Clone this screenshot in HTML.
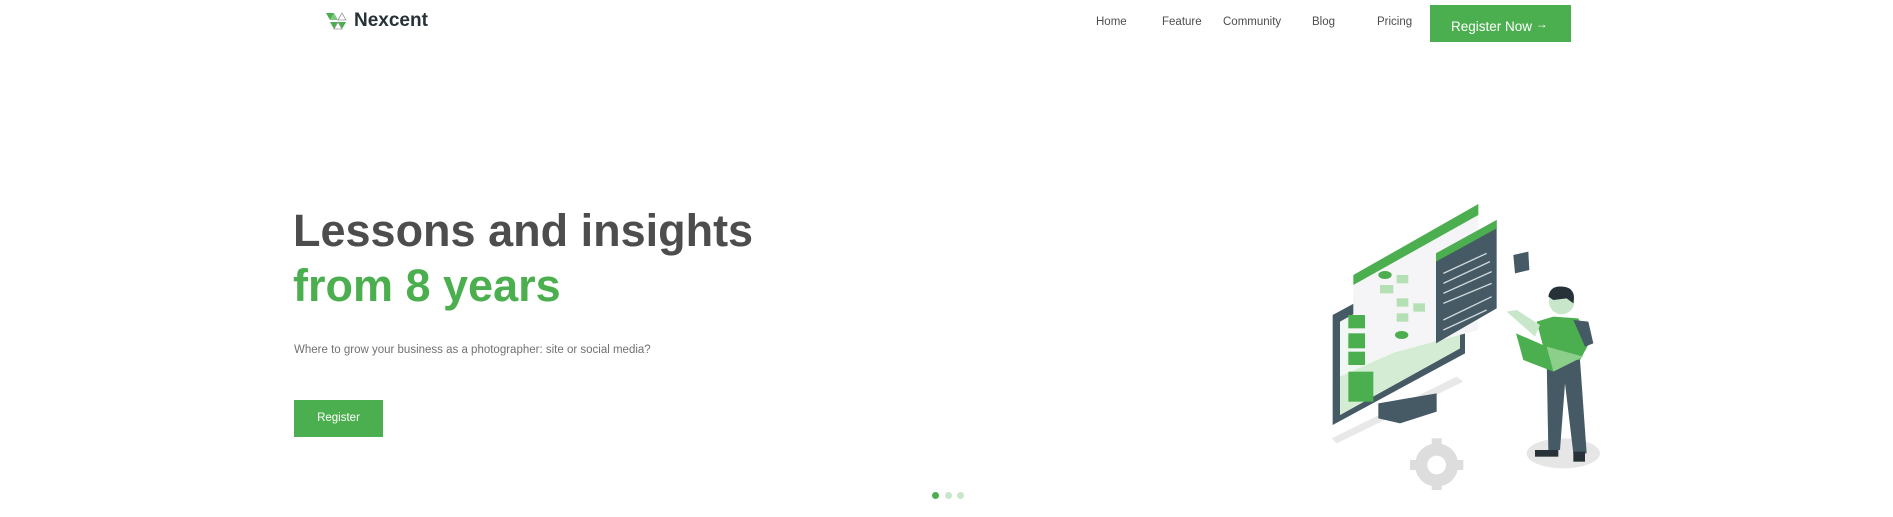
<!DOCTYPE html>
<html><head><meta charset="utf-8"><style>
*{margin:0;padding:0;box-sizing:border-box}
body{width:1893px;height:517px;background:#fff;font-family:"Liberation Sans",Arial,sans-serif;position:relative;overflow:hidden}
.a{position:absolute;white-space:nowrap}
.nav{font-size:11.5px;color:#4d4d4d;top:16px}
</style></head><body>
<svg class="a" style="left:326px;top:12px" width="24" height="18" viewBox="0 0 24 18">
<polygon points="0,1 8,1 4,8" fill="#4caf4f"/><polygon points="4,8 12,8 8,1" fill="#4caf4f" opacity=".7"/>
<polygon points="12,8 16,1 20,8" fill="none" stroke="#999" stroke-width=".8"/>
<polygon points="4,10 12,10 8,17" fill="#4caf4f"/><polygon points="12,10 20,10 16,17" fill="#4caf4f"/>
<polygon points="8,17 12,10 16,17" fill="none" stroke="#999" stroke-width=".8"/>
</svg>
<div class="a" style="left:354px;top:10px;font-size:19px;font-weight:bold;color:#263238">Nexcent</div>
<div class="a nav" style="left:1096px">Home</div>
<div class="a nav" style="left:1162px">Feature</div>
<div class="a nav" style="left:1223px">Community</div>
<div class="a nav" style="left:1312px">Blog</div>
<div class="a nav" style="left:1377px">Pricing</div>
<div class="a" style="left:1430px;top:5px;width:141px;height:37px;background:#4caf4f;color:#fff;font-size:13.5px;line-height:38px;padding-left:21px">Register Now <span style="font-size:12px;vertical-align:3px">&rarr;</span></div>
<div class="a" style="left:293px;top:203px;font-size:45px;font-weight:bold;color:#4d4d4d;line-height:56px">Lessons and insights</div>
<div class="a" style="left:293px;top:258px;font-size:45px;font-weight:bold;color:#4caf4f;line-height:56px">from 8 years</div>
<div class="a" style="left:294px;top:344px;font-size:11.5px;color:#717171">Where to grow your business as a photographer: site or social media?</div>
<div class="a" style="left:294px;top:400px;width:89px;height:37px;background:#4caf4f;color:#fff;font-size:11.5px;line-height:37px;text-align:center">Register</div>
<div class="a" style="left:932px;top:492px;width:7px;height:7px;border-radius:50%;background:#4caf4f"></div>
<div class="a" style="left:945px;top:492px;width:7px;height:7px;border-radius:50%;background:#c8e6c9"></div>
<div class="a" style="left:957px;top:492px;width:7px;height:7px;border-radius:50%;background:#c8e6c9"></div>
<svg class="a" style="left:1300px;top:190px" width="330" height="300" viewBox="0 0 990 900">
<polygon points="95,745 470,560 490,575 110,760" fill="#e8e8e8"/>
<ellipse cx="790" cy="790" rx="110" ry="45" fill="#e6e6e6"/>
<g fill="#ddd"><circle cx="410" cy="825" r="65"/><rect x="395" y="745" width="30" height="160"/><rect x="330" y="810" width="160" height="30"/></g>
<circle cx="410" cy="825" r="28" fill="#fff"/>
<polygon points="235,640 410,610 410,665 300,700 235,685" fill="#455a64"/>
<polygon points="98,375 495,160 495,490 98,705" fill="#455a64"/>
<polygon points="120,395 480,195 480,475 120,675" fill="#f1f7f1"/>
<polygon points="120,560 480,400 480,475 120,675" fill="#d4ecd3"/>
<polygon points="160,255 535,42 535,420 160,520" fill="#f5f5f7"/>
<polygon points="160,255 535,42 535,75 160,285" fill="#4caf4f"/>
<g fill="#b5dfb5"><rect x="240" y="285" width="40" height="25"/><rect x="290" y="255" width="35" height="25"/><rect x="290" y="325" width="35" height="25"/><rect x="290" y="370" width="35" height="25"/><rect x="340" y="340" width="35" height="25"/></g>
<ellipse cx="255" cy="255" rx="20" ry="12" fill="#4caf4f"/><ellipse cx="305" cy="435" rx="20" ry="12" fill="#4caf4f"/>
<g fill="#4caf4f"><rect x="145" y="375" width="50" height="40"/><rect x="145" y="430" width="50" height="45"/><rect x="145" y="485" width="50" height="40"/><rect x="145" y="545" width="75" height="90"/></g>
<polygon points="408,190 590,90 590,355 408,460" fill="#455a64"/>
<polygon points="408,190 590,90 590,115 408,215" fill="#4caf4f"/>
<g stroke="#cfd8dc" stroke-width="4"><line x1="430" y1="250" x2="560" y2="190"/><line x1="430" y1="280" x2="570" y2="215"/><line x1="430" y1="310" x2="575" y2="245"/><line x1="430" y1="340" x2="575" y2="280"/><line x1="430" y1="390" x2="575" y2="320"/><line x1="430" y1="420" x2="560" y2="360"/></g>
<polygon points="640,195 685,185 688,240 645,250" fill="#455a64"/>
<polygon points="740,510 840,510 860,790 820,790 795,580 780,780 745,780" fill="#455a64"/>
<polygon points="710,395 760,380 835,385 870,455 840,510 740,510" fill="#4caf4f"/>
<polygon points="820,390 865,395 880,460 855,470" fill="#455a64"/>
<circle cx="785" cy="335" r="38" fill="#c8e6c9"/>
<path d="M745,320 Q750,285 790,290 Q830,295 820,340 L800,325 L760,330 Z" fill="#263238"/>
<polygon points="620,365 650,360 720,405 705,440" fill="#c8e6c9"/>
<polygon points="648,430 740,470 760,545 670,510" fill="#4caf4f"/>
<polygon points="740,470 850,500 760,545" fill="#8bcf8b"/>
<rect x="705" y="780" width="70" height="20" fill="#263238"/><rect x="820" y="785" width="35" height="30" fill="#263238"/>
</svg>
</body></html>
